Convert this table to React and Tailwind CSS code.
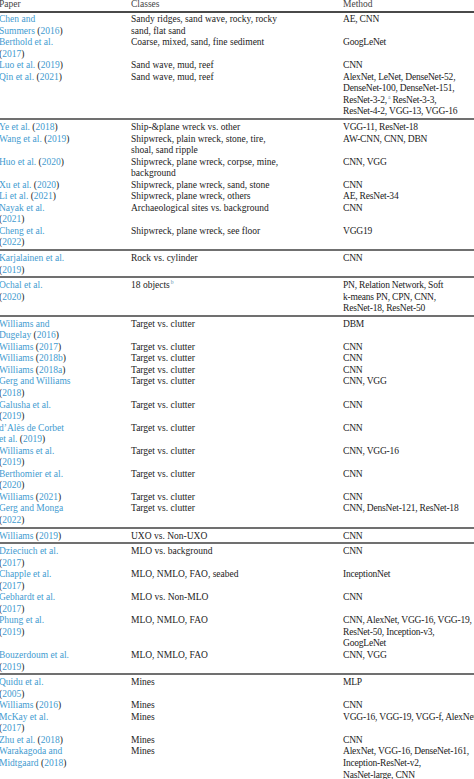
const T = "Target vs. clutter";

const groups = [
  [
    [["Chen and", "Summers (2016)"], ["Sandy ridges, sand wave, rocky, rocky", "sand, flat sand"], ["AE, CNN"]],
    [["Berthold et al.", "(2017)"], ["Coarse, mixed, sand, fine sediment"], ["GoogLeNet"]],
    [["Luo et al. (2019)"], ["Sand wave, mud, reef"], ["CNN"]],
    [
      ["Qin et al. (2021)"],
      ["Sand wave, mud, reef"],
      ["AlexNet, LeNet, DenseNet-52,", "DenseNet-100, DenseNet-151,", "ResNet-3-2,^a ResNet-3-3,", "ResNet-4-2, VGG-13, VGG-16"],
    ],
  ],
  [
    [["Ye et al. (2018)"], ["Ship-&plane wreck vs. other"], ["VGG-11, ResNet-18"]],
    [["Wang et al. (2019)"], ["Shipwreck, plain wreck, stone, tire,", "shoal, sand ripple"], ["AW-CNN, CNN, DBN"]],
    [["Huo et al. (2020)"], ["Shipwreck, plane wreck, corpse, mine,", "background"], ["CNN, VGG"]],
    [["Xu et al. (2020)"], ["Shipwreck, plane wreck, sand, stone"], ["CNN"]],
    [["Li et al. (2021)"], ["Shipwreck, plane wreck, others"], ["AE, ResNet-34"]],
    [["Nayak et al.", "(2021)"], ["Archaeological sites vs. background"], ["CNN"]],
    [["Cheng et al.", "(2022)"], ["Shipwreck, plane wreck, see floor"], ["VGG19"]],
  ],
  [[["Karjalainen et al.", "(2019)"], ["Rock vs. cylinder"], ["CNN"]]],
  [
    [
      ["Ochal et al.", "(2020)"],
      ["18 objects^b"],
      ["PN, Relation Network, Soft", "k-means PN, CPN, CNN,", "ResNet-18, ResNet-50"],
    ],
  ],
  [
    [["Williams and", "Dugelay (2016)"], [T], ["DBM"]],
    [["Williams (2017)"], [T], ["CNN"]],
    [["Williams (2018b)"], [T], ["CNN"]],
    [["Williams (2018a)"], [T], ["CNN"]],
    [["Gerg and Williams", "(2018)"], [T], ["CNN, VGG"]],
    [["Galusha et al.", "(2019)"], [T], ["CNN"]],
    [["d’Alès de Corbet", "et al. (2019)"], [T], ["CNN"]],
    [["Williams et al.", "(2019)"], [T], ["CNN, VGG-16"]],
    [["Berthomier et al.", "(2020)"], [T], ["CNN"]],
    [["Williams (2021)"], [T], ["CNN"]],
    [["Gerg and Monga", "(2022)"], [T], ["CNN, DensNet-121, ResNet-18"]],
  ],
  [[["Williams (2019)"], ["UXO vs. Non-UXO"], ["CNN"]]],
  [
    [["Dzieciuch et al.", "(2017)"], ["MLO vs. background"], ["CNN"]],
    [["Chapple et al.", "(2017)"], ["MLO, NMLO, FAO, seabed"], ["InceptionNet"]],
    [["Gebhardt et al.", "(2017)"], ["MLO vs. Non-MLO"], ["CNN"]],
    [
      ["Phung et al.", "(2019)"],
      ["MLO, NMLO, FAO"],
      ["CNN, AlexNet, VGG-16, VGG-19,", "ResNet-50, Inception-v3,", "GoogLeNet"],
    ],
    [["Bouzerdoum et al.", "(2019)"], ["MLO, NMLO, FAO"], ["CNN, VGG"]],
  ],
  [
    [["Quidu et al.", "(2005)"], ["Mines"], ["MLP"]],
    [["Williams (2016)"], ["Mines"], ["CNN"]],
    [["McKay et al.", "(2017)"], ["Mines"], ["VGG-16, VGG-19, VGG-f, AlexNet"]],
    [["Zhu et al. (2018)"], ["Mines"], ["CNN"]],
    [
      ["Warakagoda and", "Midtgaard (2018)"],
      ["Mines"],
      ["AlexNet, VGG-16, DenseNet-161,", "Inception-ResNet-v2,", "NasNet-large, CNN"],
    ],
  ],
];

// names and years are links (blue), brackets stay black
function PaperLine({ text }) {
  const parts = text.split(/([()])/).filter(Boolean);
  return (
    <div>
      {parts.map((p, i) =>
        p === "(" || p === ")" ? (
          <span key={i}>{p}</span>
        ) : (
          <span key={i} className="text-[#3f9bd0]">
            {p}
          </span>
        )
      )}
    </div>
  );
}

function TextLine({ text }) {
  const m = text.match(/^(.*)\^([a-z])(.*)$/);
  if (!m) return <div>{text}</div>;
  return (
    <div>
      {m[1]}
      <span className="inline-block text-[5.5px] leading-none text-[#5b8fb0] align-top pl-[1px]">{m[2]}</span>
      {m[3]}
    </div>
  );
}

function Row({ row }) {
  const [paper, classes, method] = row;
  return (
    <div className="grid grid-cols-[132px_212px_1fr]">
      <div>
        {paper.map((l, i) => (
          <PaperLine key={i} text={l} />
        ))}
      </div>
      <div>
        {classes.map((l, i) => (
          <TextLine key={i} text={l} />
        ))}
      </div>
      <div className="tracking-[-0.2px]">
        {method.map((l, i) => (
          <TextLine key={i} text={l} />
        ))}
      </div>
    </div>
  );
}

export default function App() {
  return (
    <div className="w-[474px] h-[779px] overflow-hidden bg-white">
      <div
        className="ml-[-1px] mt-[-1px] w-[490px] whitespace-nowrap text-[9.5px] leading-[11.55px] text-[#222]"
        style={{ fontFamily: '"Liberation Serif", "Times New Roman", serif' }}
      >
        <div className="grid grid-cols-[132px_212px_1fr] pb-[0.5px] text-[#444] border-b-2 border-[#4a4a4a]">
          <div>Paper</div>
          <div>Classes</div>
          <div>Method</div>
        </div>
        {groups.map((g, gi) => (
          <div
            key={gi}
            className={gi === 0 ? "pt-[1px]" : "border-t-2 border-[#707070] pt-[2px]"}
          >
            {g.map((r, ri) => (
              <Row key={ri} row={r} />
            ))}
          </div>
        ))}
      </div>
    </div>
  );
}
